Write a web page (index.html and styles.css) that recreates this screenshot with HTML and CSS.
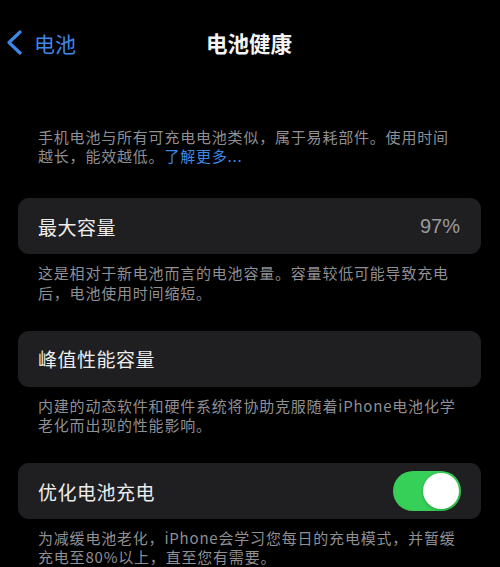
FILE: index.html
```html
<!DOCTYPE html>
<html lang="zh-CN">
<head>
<meta charset="utf-8">
<title>电池健康</title>
<link rel="stylesheet" href="styles.css">
</head>
<body>
<div class="screen">
  <header class="nav">
    <a class="back">
      <svg class="chev" width="18" height="26" viewBox="0 0 18 26"><polyline points="14,2 3,12.5 14,23" fill="none" stroke="#3d87e6" stroke-width="3.2" stroke-linecap="round" stroke-linejoin="round"/></svg>
      <span class="back-label">电池</span>
    </a>
    <h1 class="title">电池健康</h1>
  </header>

  <p class="desc intro">手机电池与所有可充电电池类似，属于易耗部件。使用时间越长，能效越低。<span class="link">了解更多...</span></p>

  <div class="card">
    <span class="label">最大容量</span>
    <span class="value">97%</span>
  </div>
  <p class="desc">这是相对于新电池而言的电池容量。容量较低可能导致充电后，电池使用时间缩短。</p>

  <div class="card">
    <span class="label">峰值性能容量</span>
  </div>
  <p class="desc">内建的动态软件和硬件系统将协助克服随着iPhone电池化学老化而出现的性能影响。</p>

  <div class="card">
    <span class="label">优化电池充电</span>
    <span class="toggle"><span class="knob"></span></span>
  </div>
  <p class="desc">为减缓电池老化，iPhone会学习您每日的充电模式，并暂缓充电至80%以上，直至您有需要。</p>
</div>
</body>
</html>
```
FILE: styles.css
```css
html, body {
  margin: 0;
  padding: 0;
  background: #000;
}
body {
  font-family: "Noto Sans CJK SC", "Noto Sans", sans-serif;
  color: #f2f2f2;
  width: 500px;
  height: 567px;
  overflow: hidden;
}
.screen {
  padding-top: 18px;
}
.nav {
  position: relative;
  height: 50px;
  display: flex;
  align-items: center;
  justify-content: center;
}
.back {
  position: absolute;
  left: 6px;
  top: 0;
  height: 50px;
  display: flex;
  align-items: center;
  gap: 10px;
  color: #3d87e6;
}
.chev {
  display: block;
}
.back-label {
  font-size: 21px;
  line-height: 1;
}
.title {
  margin: 0;
  font-size: 21.5px;
  font-weight: 700;
  color: #f4f4f4;
  line-height: 1;
  padding-right: 2px;
}
.desc {
  margin: 9px 38px 0 38px;
  font-size: 15px;
  letter-spacing: 0.8px;
  line-height: 19.2px;
  color: #8f8f94;
}
.desc.intro {
  margin-top: 59px;
  margin-bottom: 0;
}
.link {
  color: #3d87e6;
}
.card {
  margin: 33px 19px 0 18px;
  height: 56px;
  border-radius: 11px;
  background: #1f1f21;
  display: flex;
  align-items: center;
  justify-content: space-between;
  padding: 0 20px;
}
.desc + .card {
  margin-top: 29px;
}
.intro + .card {
  margin-top: 33px;
}
.label {
  font-size: 19px;
  letter-spacing: 0.5px;
  color: #ededed;
}
.value {
  font-family: "Liberation Sans", Arial, sans-serif;
  font-size: 20px;
  color: #9a9a9e;
  padding-right: 1px;
}
.toggle {
  width: 68px;
  height: 40px;
  border-radius: 20px;
  background: #36cf57;
  position: relative;
}
.knob {
  position: absolute;
  right: 2px;
  top: 2px;
  width: 36px;
  height: 36px;
  border-radius: 50%;
  background: #fff;
  box-shadow: 0 1px 3px rgba(0,0,0,0.25);
}
```
